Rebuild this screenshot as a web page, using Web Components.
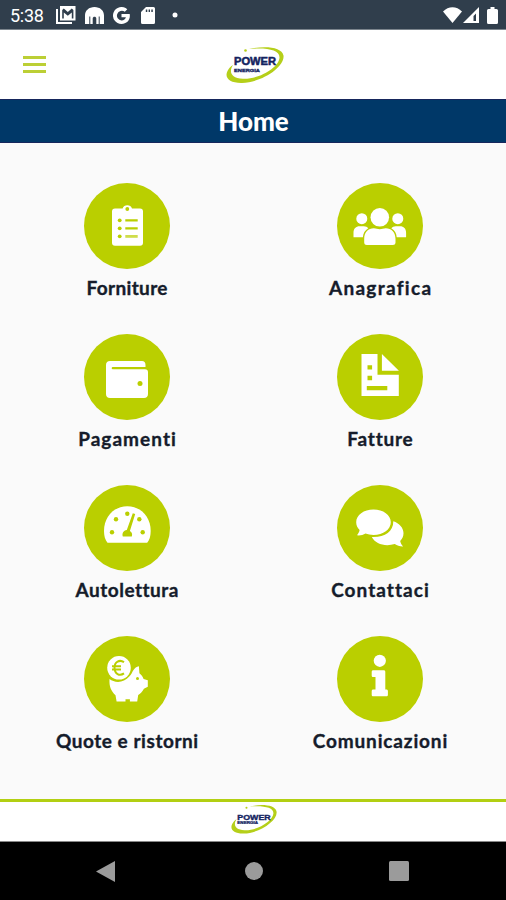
<!DOCTYPE html>
<html lang="it">
<head>
<meta charset="utf-8">
<title>Power Energia</title>
<style>
  body { margin: 0; background: #fafafa; font-family: Lato, "Liberation Sans", sans-serif; }
</style>
</head>
<body>
<power-app>
  <menu-tile icon="forniture" style="--spacing: .35px">Forniture</menu-tile>
  <menu-tile icon="anagrafica" style="--spacing: 1.3px">Anagrafica</menu-tile>
  <menu-tile icon="pagamenti" style="--spacing: 1.05px">Pagamenti</menu-tile>
  <menu-tile icon="fatture" style="--spacing: .75px">Fatture</menu-tile>
  <menu-tile icon="autolettura" style="--spacing: .5px">Autolettura</menu-tile>
  <menu-tile icon="contattaci" style="--spacing: 1.05px">Contattaci</menu-tile>
  <menu-tile icon="quote" style="--spacing: .55px">Quote e ristorni</menu-tile>
  <menu-tile icon="comunicazioni" style="--spacing: .85px">Comunicazioni</menu-tile>
</power-app>

<script>
// Icone dei riquadri, disegnate in un viewBox 86x86
const ICONS = {
  forniture: `
    <path d="M31 25.500h7.600a5 5 0 0 1 9.400 0H56a3 3 0 0 1 3 3v31.300a3 3 0 0 1-3 3H31a3 3 0 0 1-3-3V28.500a3 3 0 0 1 3-3z"/>
    <g class="cut"><circle cx="43.300" cy="26" r="1.900"/>
    <circle cx="35.700" cy="37.300" r="1.900"/><circle cx="35.700" cy="45.300" r="1.900"/><circle cx="35.700" cy="53.300" r="1.900"/>
    <path d="M41.300 36.200h12.400v2.200H41.300zM41.300 44.200h12.400v2.200H41.300z"/><path opacity=".7" d="M41.300 52h12.400v2.800H41.300z"/></g>`,
  anagrafica: `
    <circle cx="24.800" cy="35.700" r="5.500"/><circle cx="60.800" cy="35.700" r="5.500"/>
    <path d="M16.500 54.300V50c0-4.500 2.500-6.700 6-6.700h4.300c2 0 3.500.7 4.500 2-3.400 2-5.200 5-5.400 9zM69.100 54.300V50c0-4.500-2.500-6.700-6-6.700h-4.300c-2 0-3.500.7-4.500 2 3.400 2 5.200 5 5.400 9z"/>
    <circle cx="42.800" cy="34.300" r="9.300"/>
    <path d="M27.200 59.500v-3.700c0-6.500 4.200-10.500 9.600-10.500 2.400 0 3.600 1 6 1s3.600-1 6-1c5.400 0 9.700 4 9.700 10.500v3.700c0 1.700-1.200 2.500-2.600 2.500H29.800c-1.500 0-2.600-.8-2.600-2.500z"/>`,
  pagamenti: `
    <path d="M26 27h32c2.200 0 3.500 1.500 3.500 4v2H28.800c-1.500 0-1.500 2.300 0 2.300H61c2 0 3 1.300 3 3V60c0 2.500-1.500 4-4 4H26c-2.500 0-4-1.500-4-4V31c0-2.500 1.500-4 4-4z"/>
    <circle class="cut" cx="56" cy="49.400" r="2.500"/>`,
  fatture: `
    <path d="M24.500 20h16v20.700h21.300V62H24.500zM44.900 20l17 16.800h-17z"/>
    <path class="cut" d="M30.500 31.200h4.600v4.400h-4.600zM30.500 41.800h4.600v4.400h-4.600zM29.800 52h20.500v4.300H29.800z"/>`,
  autolettura: `
    <path d="M23.500 57.800c-2.200-2.500-3.500-6.500-3.500-12 0-14 10-24.600 23.300-24.600s23.400 10.600 23.400 24.600c0 5.500-1.300 9.500-3.500 12z"/>
    <g class="cut"><circle cx="28" cy="47.200" r="2.200"/><circle cx="32" cy="34.200" r="2.200"/><circle cx="43.300" cy="28.800" r="2.200"/>
    <circle cx="55.300" cy="34.200" r="2.200"/><circle cx="58.700" cy="47.200" r="2.200"/>
    <path d="M48.800 28.300l2.400.8-5.300 17c2 .8 2.700 3.300 1.900 5.400h-9c-1-3 .5-6.200 4-6.500z"/></g>`,
  contattaci: `
    <path d="M56.300 36.200c6 2 10.200 6.500 10.200 12.100 0 3-1.200 5.600-3.300 7.700.4 2.200 1.400 4 2.900 5.500-3.200.1-6-.9-8.300-2.500-9.800 3-19.500-.1-23-7 12.500.6 21.500-5 21.500-15.800z"/>
    <path d="M36.500 24.500c9.700 0 17.300 5.500 17.300 12.700s-7.600 12.700-17.300 12.700c-3 0-5.600-.5-8-1.400-2.400 1.500-5.400 2.200-8.700 1.800 1.400-1.500 2.500-3.200 2.800-5.300-2.200-2.200-3.400-4.900-3.400-7.800 0-7.200 7.600-12.700 17.300-12.700z"/>`,
  quote: `
    <path d="M25.500 43c5 4 14 4.500 20-2.700 2-2 2.600-4.200 4-6.300 1.300-2 3-3.300 5.400-3.800l.5 7c2 1.500 3.300 3.300 4.200 5.800l4.200 1.200v6.600l-3.900 1.900c-1.200 2.600-3.200 4.500-5.700 6.300l-1 6.500h-7.300v-2.300h-4.400v2.300h-8.900l-1.100-6.300c-4.300-4-6.500-8.500-6-16.200z"/>
    <circle cx="35" cy="31.800" r="11.800"/>
    <g class="line"><path d="M40 26.200c-4.500-3-9.500-.5-9.500 5.600s5 8.600 9.500 5.600M28 30.300h9M28 33.500h9"/></g>
    <circle class="cut" cx="53.500" cy="42.500" r="1.500"/>`,
  comunicazioni: `
    <circle cx="42.800" cy="24.800" r="6.100"/>
    <path d="M36.300 34.200h10.400c1 0 1.600.6 1.600 1.600v17.700h1c1 0 1.600.6 1.600 1.600v3.600c0 1-.6 1.600-1.600 1.600h-13c-1 0-1.600-.6-1.600-1.600v-3.600c0-1 .6-1.600 1.600-1.600h2.200V41h-2.200c-1 0-1.600-.6-1.600-1.600v-3.600c0-1 .6-1.600 1.600-1.600z"/>`
}

class StatusBar extends HTMLElement {
  constructor() {
    super()
    this.attachShadow({ mode: "open" })
    this.shadowRoot.innerHTML = `
      <style>
        :host {
          display: flex;
          align-items: center;
          box-sizing: border-box;
          height: 30px;
          padding: 1px 8px 0 10px;
          background: #303e4c;
          border-bottom: 1px solid #7c858d;
          color: #fff;
          font: 18px/30px Roboto, sans-serif;
        }
        .time { width: 46px; letter-spacing: -.3px; padding-top: 2px; }
        svg { display: block; fill: #fff; flex: none; }
        .left { display: flex; align-items: center; gap: 9px; flex: 1; }
        .right { display: flex; align-items: center; }
      </style>
      <span class="time">5:38</span>
      <div class="left">
        <svg width="20" height="18" viewBox="0 0 20 18"><path d="M0 3h2v13h14v2H0z"/><path fill-rule="evenodd" d="M4 0h15.500v14.500H4zM6.200 4v8.500h1.600V6.500l4 3.200 4-3.200v6h1.600V4l-1.600-1.500-4 3.500-4-3.500z"/></svg>
        <svg width="19" height="17" viewBox="0 0 19 17"><path d="M0 17V8.500C0 3.500 4 0 9.500 0S19 3.500 19 8.500V17h-4.300V9.500h-1V17h-2.400v-5.500c0-2.400-3.600-2.400-3.600 0V17H5.300V9.500h-1V17z"/></svg>
        <svg width="17" height="17" viewBox="0 0 17 17"><path d="M8.500 7h8.200c1 6-2.800 10-8.200 10a8.500 8.500 0 1 1 5.800-14.700l-2.500 2.400A4.900 4.900 0 1 0 8.500 13.500c2.400 0 3.900-1.200 4.400-3.200H8.500z"/></svg>
        <svg width="14" height="17" viewBox="0 0 14 17" style="margin-left:2px"><path fill-rule="evenodd" d="M5 0h7.500q1.500 0 1.500 1.500v14q0 1.500-1.500 1.500h-11Q0 17 0 15.500V5zM4.800 2.500v2.500h1.500v-2.500zM7.600 2.500v2.500H9v-2.500zM10.300 2.500v2.500h1.500v-2.500z"/></svg>
        <svg width="6" height="6" viewBox="0 0 6 6" style="margin-left:8px"><circle cx="3" cy="3" r="2.500"/></svg>
      </div>
      <div class="right">
        <svg width="19" height="16" viewBox="0 0 19 16"><path d="M0 4.500C5.500-1.300 13.500-1.300 19 4.500L9.500 16z"/></svg>
        <svg width="17" height="16" viewBox="0 0 17 16" style="margin-left:1px"><path fill-rule="evenodd" d="M0 16L16 0v16zM10.500 9V14H13V6.500z"/></svg>
        <svg width="11" height="17" viewBox="0 0 11 17" style="margin-left:7px"><path d="M3.500 0h4v2H9.500Q11 2 11 3.500v12q0 1.500-1.500 1.500h-8Q0 17 0 15.500v-12Q0 2 1.500 2h2z"/></svg>
      </div>
    `
  }
}

class PowerLogo extends HTMLElement {
  constructor() {
    super()
    this.attachShadow({ mode: "open" })
    this.shadowRoot.innerHTML = `
      <style>
        :host { display: block; width: 58px; }
        svg { display: block; width: 100%; overflow: visible; }
        text { font-family: "Liberation Sans", Arial, sans-serif; font-weight: 700; fill: #13235f; stroke: #13235f; }
      </style>
      <svg viewBox="0 0 58 36">
        <path fill="#b5cf19" d="M23 2C38-1.500 56-.5 57.500 8.500 59 20 36 35.500 16 36 4 36.300-2 31 1.500 24 3 21 5 19.300 7 18 3 24 4 31 17 31.800 33 32.500 53 20.500 53.500 10.500 53.700 2.500 40 .5 23 2z"/>
        <circle cx="19.500" cy="3.500" r="1.300" fill="#b5cf19"/>
        <text x="8" y="18.400" font-size="10" stroke-width=".5" textLength="42" lengthAdjust="spacingAndGlyphs">POWER</text>
        <text x="8" y="24.500" font-size="4.200" stroke-width=".3" textLength="26" lengthAdjust="spacingAndGlyphs">ENERGIA</text>
      </svg>
    `
  }
}

class MenuTile extends HTMLElement {
  constructor() {
    super()
    this.attachShadow({ mode: "open" })
  }

  connectedCallback() {
    this.shadowRoot.innerHTML = `
      <style>
        :host { display: flex; flex-direction: column; align-items: center; }
        svg { display: block; width: 86px; height: 86px; fill: #fff; }
        .disc, .cut { fill: #bacf00; }
        .line { fill: none; stroke: #bacf00; stroke-width: 2; }
        .label {
          margin-top: 7px;
          padding-left: calc(var(--spacing, 1px) + 1px);
          color: #151c2b;
          font-size: 19px;
          font-weight: 700;
          line-height: 24px;
          letter-spacing: var(--spacing, 1px);
          -webkit-text-stroke: .35px #151c2b;
          white-space: nowrap;
        }
      </style>
      <svg viewBox="0 0 86 86"><circle class="disc" cx="43" cy="43" r="43"/>${ICONS[this.getAttribute("icon")]}</svg>
      <div class="label"><slot></slot></div>
    `
  }
}

class NavBar extends HTMLElement {
  constructor() {
    super()
    this.attachShadow({ mode: "open" })
    this.shadowRoot.innerHTML = `
      <style>
        :host {
          display: flex;
          align-items: center;
          justify-content: space-between;
          box-sizing: border-box;
          height: 58px;
          padding: 0 97px 0 96px;
          background: #000;
        }
        svg { display: block; fill: #9b9b9b; }
      </style>
      <svg width="19" height="21" viewBox="0 0 19 21"><path d="M19 0v21L0 10.500z"/></svg>
      <svg width="18" height="18" viewBox="0 0 18 18" style="margin-left:3px"><circle cx="9" cy="9" r="9"/></svg>
      <svg width="20" height="20" viewBox="0 0 20 20"><rect width="20" height="20" rx="1.500"/></svg>
    `
  }
}

class PowerApp extends HTMLElement {
  constructor() {
    super()
    this.attachShadow({ mode: "open" })
    this.shadowRoot.innerHTML = `
      <style>
        :host { display: flex; flex-direction: column; width: 506px; height: 900px; overflow: hidden; }
        header {
          display: grid;
          grid-template-columns: 1fr 58px 1fr;
          align-items: center;
          box-sizing: border-box;
          height: 69px;
          padding-left: 3px;
          background: #fff;
        }
        .burger { display: grid; gap: 4px; width: 23px; margin-left: 20px; }
        .burger i { height: 2.700px; background: #bccf35; }
        h1 {
          box-sizing: border-box;
          height: 44px;
          margin: 0;
          padding-left: 1px;
          border: solid #16265c;
          border-width: 1px 0;
          background: #003868;
          color: #fff;
          font-size: 26px;
          font-weight: 900;
          line-height: 43px;
          text-align: center;
        }
        main {
          flex: 1;
          display: grid;
          grid-template-columns: 1fr 1fr;
          grid-auto-rows: 151px;
          padding-top: 40px;
          background: #fafafa;
        }
        footer {
          display: flex;
          justify-content: center;
          box-sizing: border-box;
          height: 43px;
          padding: 3px 0 0 2px;
          border-top: 3px solid #b2cf12;
          border-bottom: 1px solid #888;
          background: #fff;
        }
        footer power-logo { width: 46px; }
      </style>
      <status-bar></status-bar>
      <header>
        <div class="burger"><i></i><i></i><i></i></div>
        <power-logo></power-logo>
      </header>
      <h1>Home</h1>
      <main><slot></slot></main>
      <footer><power-logo></power-logo></footer>
      <nav-bar></nav-bar>
    `
  }
}

customElements.define("status-bar", StatusBar)
customElements.define("power-logo", PowerLogo)
customElements.define("menu-tile", MenuTile)
customElements.define("nav-bar", NavBar)
customElements.define("power-app", PowerApp)
</script>
</body>
</html>
